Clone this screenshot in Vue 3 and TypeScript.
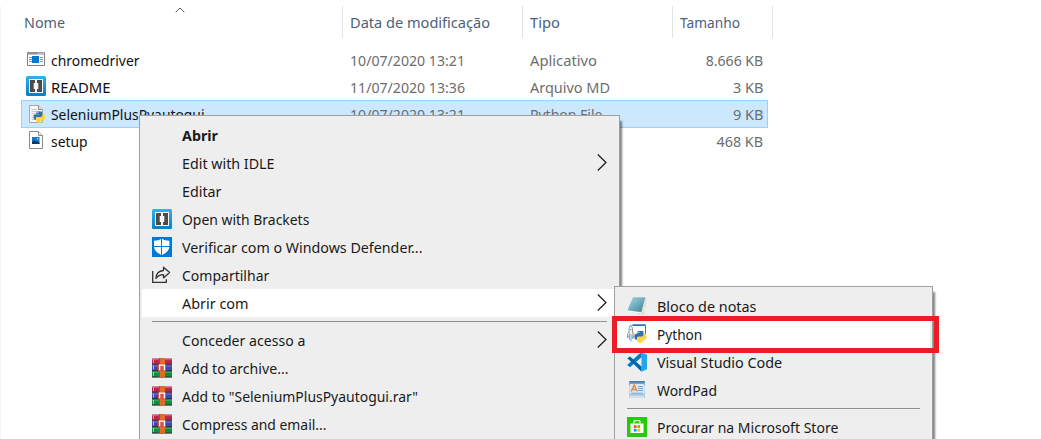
<script setup lang="ts">
import { nextTick, onMounted, ref } from 'vue'

interface Label { text: string; width: number }
interface FileRow { icon: string; name: Label; date: Label; kind: Label; size: Label; selected?: boolean }
interface MenuItem { icon?: string; label?: Label; bold?: boolean; arrow?: boolean; active?: boolean; divider?: boolean }

const l = (text: string, width: number): Label => ({ text, width })

const headers: Label[] = [l('Nome', 41), l('Data de modificação', 140), l('Tipo', 30), l('Tamanho', 60)]

const files: FileRow[] = [
  { icon: 'app', name: l('chromedriver', 88.5), date: l('10/07/2020 13:21', 115), kind: l('Aplicativo', 67), size: l('8.666 KB', 57.5) },
  { icon: 'brackets', name: l('README', 59.5), date: l('11/07/2020 13:36', 115), kind: l('Arquivo MD', 80), size: l('3 KB', 30.5) },
  { icon: 'pyfile', name: l('SeleniumPlusPyautogui', 153.5), date: l('10/07/2020 13:21', 115), kind: l('Python File', 72.5), size: l('9 KB', 30.5), selected: true },
  { icon: 'image', name: l('setup', 36.5), date: l('', 0), kind: l('', 0), size: l('468 KB', 46.5) },
]

const menu: MenuItem[] = [
  { label: l('Abrir', 36), bold: true },
  { label: l('Edit with IDLE', 92.5), arrow: true },
  { label: l('Editar', 39.5) },
  { icon: 'brackets', label: l('Open with Brackets', 127.3) },
  { icon: 'defender', label: l('Verificar com o Windows Defender...', 240.5) },
  { icon: 'share', label: l('Compartilhar', 87.3) },
  { label: l('Abrir com', 66.5), arrow: true, active: true },
  { divider: true },
  { label: l('Conceder acesso a', 123.3), arrow: true },
  { icon: 'rar', label: l('Add to archive...', 106.5) },
  { icon: 'rar', label: l('Add to "SeleniumPlusPyautogui.rar"', 236) },
  { icon: 'rar', label: l('Compress and email...', 144.5) },
]

const submenu: MenuItem[] = [
  { icon: 'notepad', label: l('Bloco de notas', 99.5) },
  { icon: 'python', label: l('Python', 45.3), active: true },
  { icon: 'vscode', label: l('Visual Studio Code', 125.2) },
  { icon: 'wordpad', label: l('WordPad', 60) },
  { divider: true },
  { icon: 'store', label: l('Procurar na Microsoft Store', 181.3) },
]

const root = ref<HTMLElement | null>(null)

onMounted(async () => {
  await nextTick()
  root.value?.querySelectorAll<HTMLElement>('[data-width]').forEach((el) => {
    const natural = el.getBoundingClientRect().width
    if (natural > 0) el.style.transform = `scaleX(${Number(el.dataset.width) / natural})`
  })
})
</script>

<template>
  <div ref="root" class="explorer">
    <svg class="symbols" width="0" height="0">
      <defs>
        <linearGradient id="blue" x2="0" y2="1"><stop stop-color="#2fb2ea" /><stop offset="1" stop-color="#087fc3" /></linearGradient>
        <linearGradient id="pad" x2="1" y2="1"><stop stop-color="#a9dbe6" /><stop offset="1" stop-color="#347f98" /></linearGradient>
        <linearGradient id="word" x2="0" y2="1"><stop stop-color="#4378b0" /><stop offset=".22" stop-color="#70a2d5" /><stop offset=".3" stop-color="#c4ddf4" /><stop offset="1" stop-color="#8db8df" /></linearGradient>
      </defs>
      <symbol id="i-app" viewBox="0 0 20 20">
        <path d="M1.5 3.5h17v13h-17z" fill="#fff" stroke="#7c8287" />
        <path d="M1 3h18v2.5H1z" fill="#8b9196" />
        <path d="M12 4.3h1.2M14.4 4.3h1.2M16.8 4.3H18" stroke="#fff" />
        <path d="M3 8.5h3M3 10.5h3M3 12.5h3M14 8.5h3M14 10.5h3M14 12.5h3" stroke="#8b9196" />
        <path d="M6 7h7v7H6z" fill="#0078d7" />
      </symbol>
      <symbol id="i-brackets" viewBox="0 0 20 20">
        <rect width="20" height="20" rx="1.5" fill="url(#blue)" />
        <rect x="3" y="3" width="14" height="14" fill="#f5f5f5" />
        <path d="M4 4h5v3H7.7v6H9v3H4zM16 4h-5v3h1.3v6H11v3h5z" fill="#4b4b4b" />
      </symbol>
      <symbol id="i-snake" viewBox="0 0 12 12">
        <path d="M3 3V1.6Q3 .2 6 .2T9 1.6v3Q9 6 7.6 6H4.2Q2.8 6 2.8 7.4v1.4H1.6Q.1 8.8.1 6T1.6 3.2H6V3z" fill="#3472a6" />
        <path d="M9 9v1.4q0 1.4-3 1.4t-3-1.4v-3Q3 6 4.4 6h3.4q1.4 0 1.4-1.4V3.2h1.2q1.5 0 1.5 2.8t-1.5 2.8H6V9z" fill="#ffd43b" />
        <circle cx="4.5" cy="1.6" r=".6" fill="#fff" /><circle cx="7.5" cy="10.4" r=".6" fill="#fff" />
      </symbol>
      <symbol id="i-pyfile" viewBox="0 0 20 20">
        <path d="M3.5 1.5h9l4 4v13h-13z" fill="#f8f8f8" stroke="#a6a6a6" />
        <path d="M12.5 1.5v4h4" fill="#ddd" stroke="#8f8f8f" />
        <path d="M5.5 5.5h6M5.5 7.5h6M5.5 9.5h4M5.5 11.5h3M5.5 13.5h3M5.5 15.5h4" stroke="#cbcbcb" />
        <use href="#i-snake" x="7.3" y="7" width="12" height="12" />
      </symbol>
      <symbol id="i-image" viewBox="0 0 20 20">
        <path d="M3.5 1.5h9l4 4v13h-13z" fill="#fff" stroke="#8a8a8a" />
        <path d="M12.5 1.5v4h4" fill="#eee" stroke="#8a8a8a" />
        <path d="M6 7h7.5v7H6z" fill="#187bce" /><path d="M6 14v-2l2.3-2 2 2 1.6-1 1.6 2v1z" fill="#0c3865" />
        <path d="M11 8.2h1v1h-1z" fill="#fff" />
      </symbol>
      <symbol id="i-defender" viewBox="0 0 20 20">
        <path d="M0 0h20v20H0z" fill="#0078d7" />
        <path d="M9.7 1.8q3 2 7.7 2V9q0 6-7.7 9.2Q2 15 2 9V3.8q4.7 0 7.7-2" fill="#fff" />
        <path d="M9.5 1.5v17M1.5 9.5H18" stroke="#0078d7" />
      </symbol>
      <symbol id="i-share" viewBox="0 0 20 20">
        <path d="M.7 6v11.4h13.6v-3.2" fill="none" stroke="#333" stroke-width="1.3" />
        <path d="M4 13.5Q4.2 6 11.5 5.5V2.2l6.1 5.4-6.1 5.3V9.6Q6.7 9.5 4 13.5z" fill="none" stroke="#333" stroke-width="1.3" stroke-linejoin="round" />
      </symbol>
      <symbol id="i-rar" viewBox="0 0 20 20">
        <path d="M0 .5h20v6H0z" fill="#b6234d" /><path d="M0 1h20v1.2H0z" fill="#dc4c70" />
        <path d="M0 6.5h20V13H0z" fill="#4346a9" /><path d="M0 7.5h20v1.2H0z" fill="#6b6dcb" />
        <path d="M0 13h20v6.3H0z" fill="#168941" /><path d="M0 13.7h20v1.2H0z" fill="#35ae5c" />
        <path d="M0 6.2h20M0 12.6h20M0 19h20" stroke="#303038" />
        <path d="M1.5 1.5V5M1.5 7.5v4M1.5 14v4" stroke="#efb737" />
        <path d="M7 0h6v19.5H7z" fill="#df6b25" /><path d="M7 0h1v19.5H7z" fill="#b84a1b" />
        <path d="M6 6.3h8v6.8H6z" fill="#d65340" /><path d="M7.6 12.2V7.2h4.8v5" fill="none" stroke="#fff" stroke-width="1.3" />
      </symbol>
      <symbol id="i-notepad" viewBox="0 0 20 20">
        <path d="M6 2l12-.7 1.5 1.5-2 14-1.5 2L1 15z" fill="#bdd1d5" />
        <path d="M6 1.5h12L14.5 16 .5 14.3z" fill="url(#pad)" />
        <path d="M14.5 16l3.8-13.5.8 1-1.6 14.5z" fill="#e9e4ca" />
        <path d="M6 2l11.8.3" stroke="#8ea9ae" stroke-dasharray="1 1" />
        <path d="M1 15l14 2.2" stroke="#f8ffff" />
      </symbol>
      <symbol id="i-python" viewBox="0 0 20 20">
        <path d="M5.5 1.5h13v9" fill="#fff" stroke="#4a78b8" />
        <path d="M5.5 1h13" stroke="#356daf" stroke-width="1.5" />
        <use href="#i-snake" x="7.2" y="6.5" width="12.5" height="12.5" />
        <path d="M3.7 1Q1.8 3 2 6v5h3.5V6q.1-3-1.8-5z" fill="#f7f7f7" stroke="#777" stroke-width=".8" />
        <path d="M2 8L.5 10v4L2 11m3.5-3L7 10v4l-1.5-3" fill="#fff" stroke="#888" stroke-width=".8" />
        <circle cx="3.7" cy="5.8" r=".8" fill="#89a" /><path d="M2.5 12v3.8M4 12v5.3M5.3 12v3" stroke="#6cacd9" />
      </symbol>
      <symbol id="i-vscode" viewBox="0 0 20 20">
        <path d="M14.5.3L20 2.7v14.6l-5.5 2.4z" fill="#24a6eb" />
        <path d="M14.5.3v5L3 15.2l-2.8-2.3L11.5 2.5z" fill="#087bc5" />
        <path d="M.2 6.3L3 4.5l11.5 10v5.2L9.8 15z" fill="#0065a9" />
      </symbol>
      <symbol id="i-wordpad" viewBox="0 0 20 20">
        <path d="M2.2 1h15.6v17H2.2z" fill="url(#word)" />
        <path d="M3 3.8h14v10H3z" fill="#d8eaf8" />
        <path d="M4.2 11.5L7.2 5l3 6.5M5.3 9.5h3.8" fill="none" stroke="#e38b43" stroke-width="1.5" />
        <path d="M11 6.5h5M11 8.5h5M11 10.5h5M4 13.2h12" stroke="#79a9d3" />
        <path d="M2 15.5h16l-1 2.5H3z" fill="#d8dfe5" />
      </symbol>
      <symbol id="i-store" viewBox="0 0 20 20">
        <path d="M0 0h20v20H0z" fill="#27ca08" />
        <path d="M3.5 6.5h13V16h-13z" fill="#fff" /><path d="M7 6.5V3.7h6v2.8" fill="none" stroke="#fff" />
        <path d="M6.8 8.2h2.8V11H6.8z" fill="#f25022" /><path d="M10.4 8.2h2.8V11h-2.8z" fill="#7fba00" />
        <path d="M6.8 11.8h2.8v2.8H6.8z" fill="#00a4ef" /><path d="M10.4 11.8h2.8v2.8h-2.8z" fill="#ffb900" />
      </symbol>
    </svg>

    <header class="columns">
      <div v-for="h in headers" :key="h.text" class="head">
        <span class="label" :data-width="h.width">{{ h.text }}</span>
      </div>
      <svg class="sort" width="10" height="6" viewBox="0 0 10 6"><path d="M.7 5.2L5 1l4.3 4.2" fill="none" stroke="#555" /></svg>
    </header>

    <main class="files">
      <div v-for="f in files" :key="f.name.text" class="file" :class="{ selected: f.selected }">
        <div class="name">
          <svg class="icon"><use :href="'#i-' + f.icon" /></svg>
          <span class="label" :data-width="f.name.width">{{ f.name.text }}</span>
        </div>
        <div><span class="label" :data-width="f.date.width">{{ f.date.text }}</span></div>
        <div><span class="label" :data-width="f.kind.width">{{ f.kind.text }}</span></div>
        <div class="size"><span class="label" :data-width="f.size.width">{{ f.size.text }}</span></div>
      </div>
    </main>

    <nav class="menu context">
      <template v-for="(m, i) in menu" :key="i">
        <div v-if="m.divider" class="divider"></div>
        <div v-else class="item" :class="{ active: m.active, bold: m.bold }">
          <span class="slot"><svg v-if="m.icon" class="icon"><use :href="'#i-' + m.icon" /></svg></span>
          <span class="label" :data-width="m.label!.width">{{ m.label!.text }}</span>
          <svg v-if="m.arrow" class="arrow" viewBox="0 0 10 18"><path d="M.8 .5L9 8.5 .8 16.5" fill="none" stroke="#17191c" stroke-width="1.2" /></svg>
        </div>
      </template>
    </nav>

    <nav class="menu open-with">
      <template v-for="(m, i) in submenu" :key="i">
        <div v-if="m.divider" class="divider"></div>
        <div v-else class="item" :class="{ active: m.active }">
          <span class="slot"><svg v-if="m.icon" class="icon"><use :href="'#i-' + m.icon" /></svg></span>
          <span class="label" :data-width="m.label!.width">{{ m.label!.text }}</span>
        </div>
      </template>
    </nav>
    <div class="highlight"></div>
  </div>
</template>

<style scoped>
.explorer {
  position: relative;
  width: 1041px;
  height: 439px;
  overflow: hidden;
  box-sizing: border-box;
  padding-top: 6px;
  background: linear-gradient(#f6f6f6, #f6f6f6) 0 6px / 1px 100% no-repeat #fff;
  font-family: "Noto Sans", "Open Sans", sans-serif;
  font-size: 14.5px;
  line-height: 20px;
  color: #1a1a1a;
}
.symbols { position: absolute; }
.label { display: inline-block; flex: none; white-space: pre; transform-origin: 0 50%; }
.icon { display: block; flex: none; width: 20px; height: 20px; }
.columns {
  display: grid;
  grid-template-columns: 319px 180px 150px 100px;
  width: 749px;
  height: 32px;
  margin-left: 24px;
  color: #4c607a;
}
.head { box-sizing: border-box; height: 32px; padding: 6px 0 0 7px; border-right: 1px solid #e2e2e2; }
.head:first-child { padding-left: 0; }
.sort { position: absolute; left: 175px; top: 7px; }
.files { width: 747px; margin: 8px 0 0 21px; }
.file {
  display: grid;
  grid-template-columns: 329px 180px 150px 83px;
  align-items: center;
  height: 27px;
  color: #6d6d6d;
}
.file.selected { background: #cce8ff; box-shadow: inset 0 0 0 1px #99d1ff; height: 28px; margin-bottom: -1px; }
.name { display: flex; align-items: center; gap: 5px; padding-left: 5px; color: #111; }
.name .icon { margin-bottom: 1px; }
.size { display: flex; justify-content: flex-end; }
.size .label { transform-origin: 100% 50%; }
.menu {
  position: absolute;
  box-sizing: border-box;
  padding: 5px 2px;
  border: 1px solid #a0a0a0;
  background: #eee;
  box-shadow: 3px 5px 2px -1px rgba(0, 0, 0, .5);
}
.context { left: 139px; top: 115px; width: 481px; height: 360px; }
.open-with { left: 614px; top: 286px; width: 319px; height: 180px; }
.item { display: flex; align-items: center; height: 28px; padding: 0 10px; }
.item.active { background: #fff; }
.item.bold { font-weight: 700; }
.slot { flex: none; width: 30px; }
.arrow { width: 10px; height: 18px; margin-left: auto; }
.divider { height: 1px; margin: 4px 10px; background: #919191; }
.highlight {
  position: absolute;
  left: 612px;
  top: 316px;
  box-sizing: border-box;
  width: 327px;
  height: 37px;
  border: 5px solid #ed1c24;
}
</style>
